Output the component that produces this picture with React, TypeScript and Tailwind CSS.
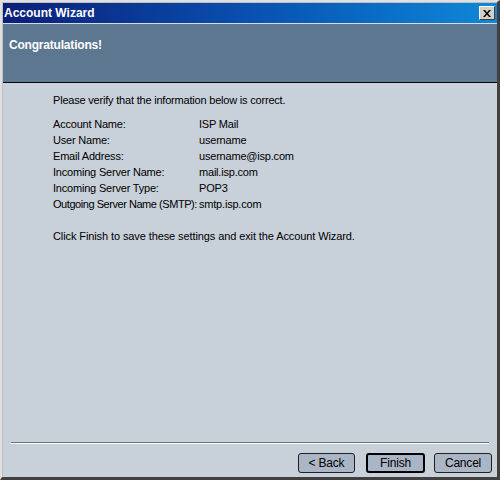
import React from "react";

const rows: [string, string][] = [
  ["Account Name:", "ISP Mail"],
  ["User Name:", "username"],
  ["Email Address:", "username@isp.com"],
  ["Incoming Server Name:", "mail.isp.com"],
  ["Incoming Server Type:", "POP3"],
  ["Outgoing Server Name (SMTP):", "smtp.isp.com"],
];

function Btn({ label, def, w }: { label: string; def?: boolean; w: string }) {
  return (
    <div
      className={
        "flex items-center justify-center h-[20px] rounded-[3px] bg-[#aab6c6] text-black text-[12px] tracking-[-0.2px] " +
        w +
        " " +
        (def ? "border-2 border-black" : "border border-[#202020]")
      }
    >
      {label}
    </div>
  );
}

export default function App() {
  return (
    <div
      className="w-[500px] h-[480px] bg-[#c0c0c0] flex flex-col border-t-[2px] border-l-[2px] border-t-[#e0e0e0] border-l-[#e0e0e0] border-r-[3px] border-b-[3px] border-r-[#404040] border-b-[#404040]"
      style={{ fontFamily: '"Liberation Sans", Arial, sans-serif' }}
    >
      <div className="flex flex-col flex-1 m-[1px] mr-0 mb-0">
        {/* title bar */}
        <div className="h-[20px] flex items-center justify-between pl-[1px] pr-[2px] bg-gradient-to-r from-[#0a1e78] via-[#0a50b0] to-[#1088d8]">
          <span className="text-white font-bold text-[12px] leading-none">Account Wizard</span>
          <div className="w-[16px] h-[14px] bg-[#d4d0c8] border border-t-white border-l-white border-r-[#404040] border-b-[#404040] flex items-center justify-center">
            <svg width="8" height="7" viewBox="0 0 8 7">
              <path d="M0 0h2l2 2.5L6 0h2L5 3.5 8 7H6L4 4.5 2 7H0l3-3.5z" fill="#000" />
            </svg>
          </div>
        </div>
        <div className="h-[1px] bg-[#d8dce0]" />
        {/* header */}
        <div className="h-[59px] bg-[#5d7791] border-b border-black pl-[6px] pt-[8px]">
          <span className="text-white font-bold text-[12px] tracking-[-0.2px]">Congratulations!</span>
        </div>
        {/* content */}
        <div className="flex-1 bg-[#c8d0da] flex flex-col text-[11px] tracking-[-0.2px] text-black">
          <div className="pl-[50px] pt-[9px] flex flex-col">
            <div className="leading-[16px]">Please verify that the information below is correct.</div>
            <div className="mt-[8px] grid grid-cols-[146px_1fr] leading-[16px]">
              {rows.map(([k, v], i) => (
                <React.Fragment key={k}>
                  <div className={"whitespace-nowrap " + (i === 5 ? "tracking-[-0.45px]" : "")}>{k}</div>
                  <div className="whitespace-nowrap">{v}</div>
                </React.Fragment>
              ))}
            </div>
            <div className="mt-[16px] leading-[16px] tracking-[-0.1px] whitespace-nowrap">
              Click Finish to save these settings and exit the Account Wizard.
            </div>
          </div>
          <div className="flex-1" />
          <div className="mx-[8px] border-t border-t-[#6c7480] border-b border-b-white" />
          <div className="flex justify-end pr-[5px] pt-[9px] pb-[4px]">
            <Btn label="< Back" w="w-[57px]" />
            <div className="ml-[11px]"><Btn label="Finish" def w="w-[59px]" /></div>
            <div className="ml-[9px]"><Btn label="Cancel" w="w-[58px]" /></div>
          </div>
        </div>
      </div>
    </div>
  );
}
